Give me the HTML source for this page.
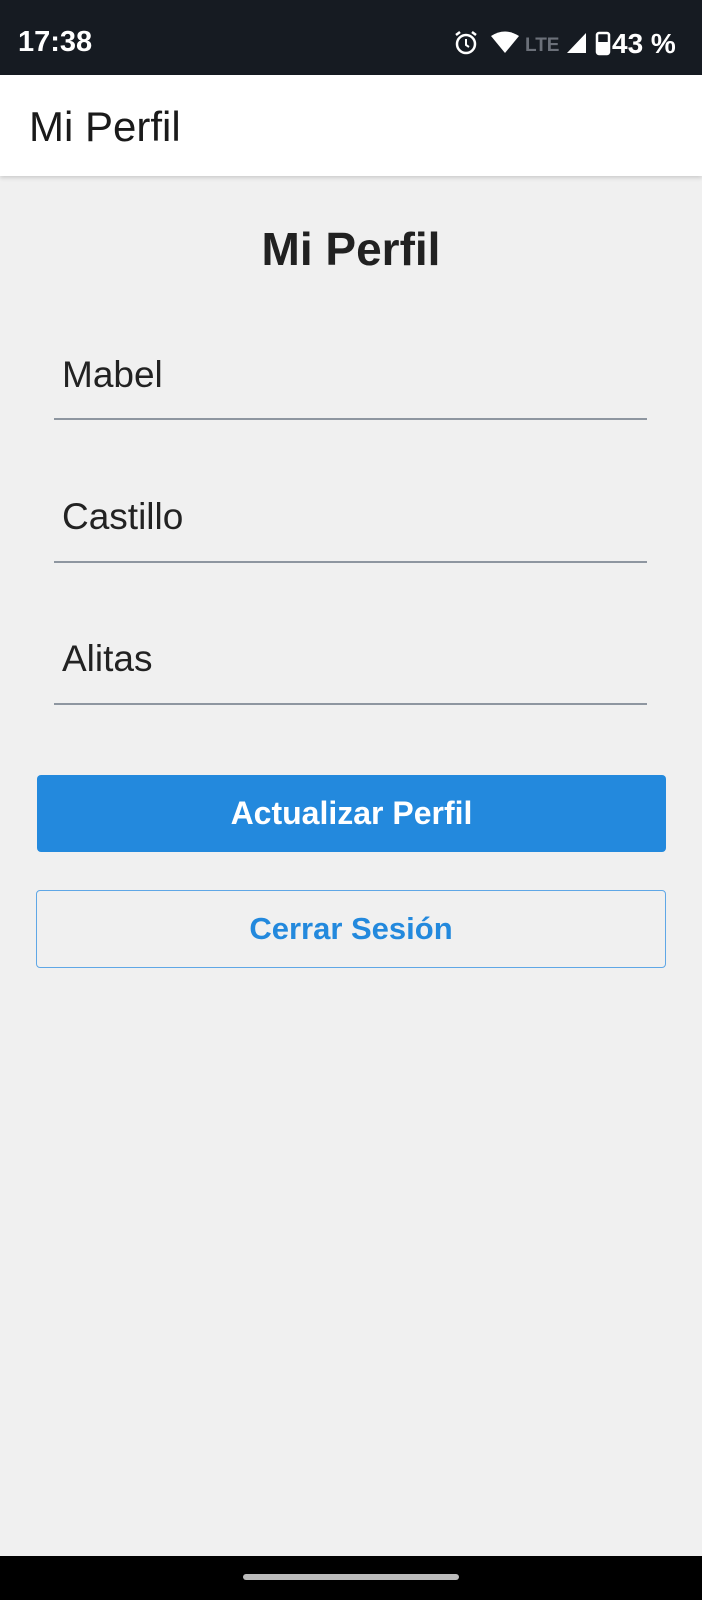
<!DOCTYPE html>
<html><head><meta charset="utf-8"><style>
*{margin:0;padding:0;box-sizing:border-box}
html{background:#f0f0f0}
body{width:702px;height:1600px;background:#f0f0f0;font-family:"Liberation Sans",sans-serif;position:relative;overflow:hidden;color:#212121}
.sb{position:absolute;left:0;top:0;width:702px;height:75px;background:#161b22;color:#fff}
.ab{position:absolute;left:0;top:75px;width:702px;height:101px;background:#fff;box-shadow:0 2px 4px rgba(0,0,0,.15)}
.abt{position:absolute;left:29px;top:28px;font-size:42px;color:#1a1a1a}
.h{position:absolute;top:222px;width:702px;text-align:center;font-size:46px;font-weight:bold}
.f{position:absolute;left:62px;font-size:37px;color:#222}
.l{position:absolute;left:54px;width:593px;height:2px;background:#8e96a0}
.b1{position:absolute;left:37px;top:775px;width:629px;height:77px;background:#2389dd;border-radius:4px;color:#fff;font-size:32px;font-weight:bold;text-align:center;line-height:77px}
.b2{position:absolute;left:36px;top:890px;width:630px;height:78px;border:1px solid #5fa7e6;border-radius:4px;color:#2389dd;font-size:31px;font-weight:bold;text-align:center;line-height:76px}
.nav{position:absolute;left:0;top:1556px;width:702px;height:44px;background:#000}
.hd{position:absolute;left:243px;top:18px;width:216px;height:6px;border-radius:3px;background:#bbb}
</style></head><body>
<div class="sb">
<div style="position:absolute;left:18px;top:26px;font-size:29px;font-weight:bold">17:38</div>
<svg style="position:absolute;left:452px;top:30px" width="240" height="30" viewBox="0 0 240 30">
<circle cx="14" cy="14" r="9" fill="none" stroke="#fff" stroke-width="2.5"/><path d="M14 9v6l3 2" stroke="#fff" stroke-width="2" fill="none"/><path d="M4 5l4-3M24 5l-4-3" stroke="#fff" stroke-width="2.5"/>
<path d="M39 6q14-9 28 0l-14 17z" fill="#fff"/>
<text x="73" y="21" font-size="19" font-weight="bold" fill="#6b7079" font-family="Liberation Sans">LTE</text>
<path d="M115 23h19v-20z" fill="#fff"/>
<rect x="145" y="3" width="12" height="21" rx="2" fill="none" stroke="#fff" stroke-width="2.5"/><rect x="146" y="12" width="10" height="12" fill="#fff"/>
<text x="160" y="23" font-size="28" font-weight="bold" fill="#fff" font-family="Liberation Sans">43 %</text>
</svg>
</div>
<div class="ab"><div class="abt">Mi Perfil</div></div>
<div class="h">Mi Perfil</div>
<div class="f" style="top:354px">Mabel</div><div class="l" style="top:418px"></div>
<div class="f" style="top:496px">Castillo</div><div class="l" style="top:561px"></div>
<div class="f" style="top:638px">Alitas</div><div class="l" style="top:703px"></div>
<div class="b1">Actualizar Perfil</div>
<div class="b2">Cerrar Sesión</div>
<div class="nav"><div class="hd"></div></div>
</body></html>
